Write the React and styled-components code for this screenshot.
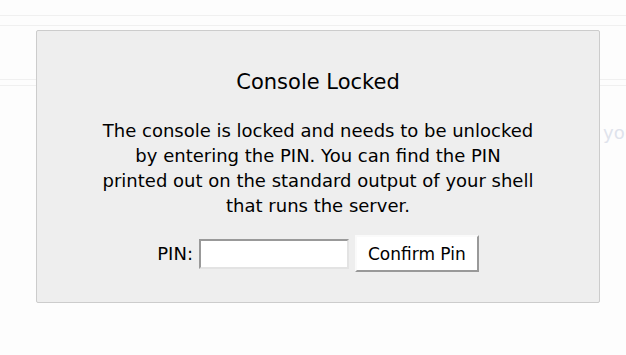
import styled, { createGlobalStyle } from 'styled-components'

const GlobalStyle = createGlobalStyle`
  html, body {
    margin: 0;
    padding: 0;
    background: #fdfdfd;
  }
  body {
    font-family: "DejaVu Sans", Verdana, sans-serif;
    color: #000;
  }
`

// the dimmed debugger page under the prompt
const Backdrop = styled.div`
  position: relative;
  height: 355px;
  overflow: hidden;
`

const Rule = styled.div`
  height: ${({ $h }) => $h}px;
  border-bottom: 1px solid #f0f0f0;
`

const FadedText = styled.div`
  margin-top: 34px;
  padding-left: 603px;
  white-space: nowrap;
  font-size: 18px;
  line-height: 25px;
  color: #dfe3ec;
`

const Overlay = styled.div`
  position: absolute;
  top: 0;
  right: 0;
  bottom: 0;
  left: 0;
`

const Inner = styled.div`
  box-sizing: border-box;
  width: 564px;
  margin: 30px 0 0 36px;
  padding: 12.5px 62.5px;
  background: #eee;
  border: 1px solid #ccc;
  border-radius: 2px;
  text-align: center;
`

const Title = styled.h1`
  margin: 23.5px 0 0;
  font-size: 21px;
  font-weight: normal;
  line-height: 30px;
`

const Message = styled.p`
  margin: 21px 0 0;
  font-size: 18px;
  line-height: 25px;
`

const PinForm = styled.form`
  display: flex;
  align-items: center;
  justify-content: center;
  gap: 6px;
  margin: 17px 0 17.5px;
  font-size: 18px;
`

const PinInput = styled.input`
  box-sizing: border-box;
  width: 150px;
  height: 30px;
  margin: 0;
  padding: 0 4px;
  background: #fff;
  border: 2px solid;
  border-color: #999 #e3e3e3 #e3e3e3 #999;
  font: inherit;
`

const Button = styled.button`
  box-sizing: border-box;
  height: 37px;
  margin: 0;
  padding: 0 11px;
  background: #fff;
  border: 2px solid;
  border-color: #fafafa #999 #999 #fafafa;
  font-family: "DejaVu Sans", Verdana, sans-serif;
  font-size: 17px;
  color: #000;
`

export default function App() {
  return (
    <>
      <GlobalStyle />
      <Backdrop>
        <Rule $h={15} />
        <Rule $h={9} />
        <Rule $h={53} />
        <Rule $h={5} />
        <FadedText>you</FadedText>
        <Overlay>
          <Inner>
            <Title>Console Locked</Title>
            <Message>
              The console is locked and needs to be unlocked<br />
              by entering the PIN. You can find the PIN<br />
              printed out on the standard output of your shell<br />
              that runs the server.
            </Message>
            <PinForm onSubmit={(e) => e.preventDefault()}>
              <span>PIN:</span>
              <PinInput type="text" name="pin" />
              <Button type="submit">Confirm Pin</Button>
            </PinForm>
          </Inner>
        </Overlay>
      </Backdrop>
    </>
  )
}
